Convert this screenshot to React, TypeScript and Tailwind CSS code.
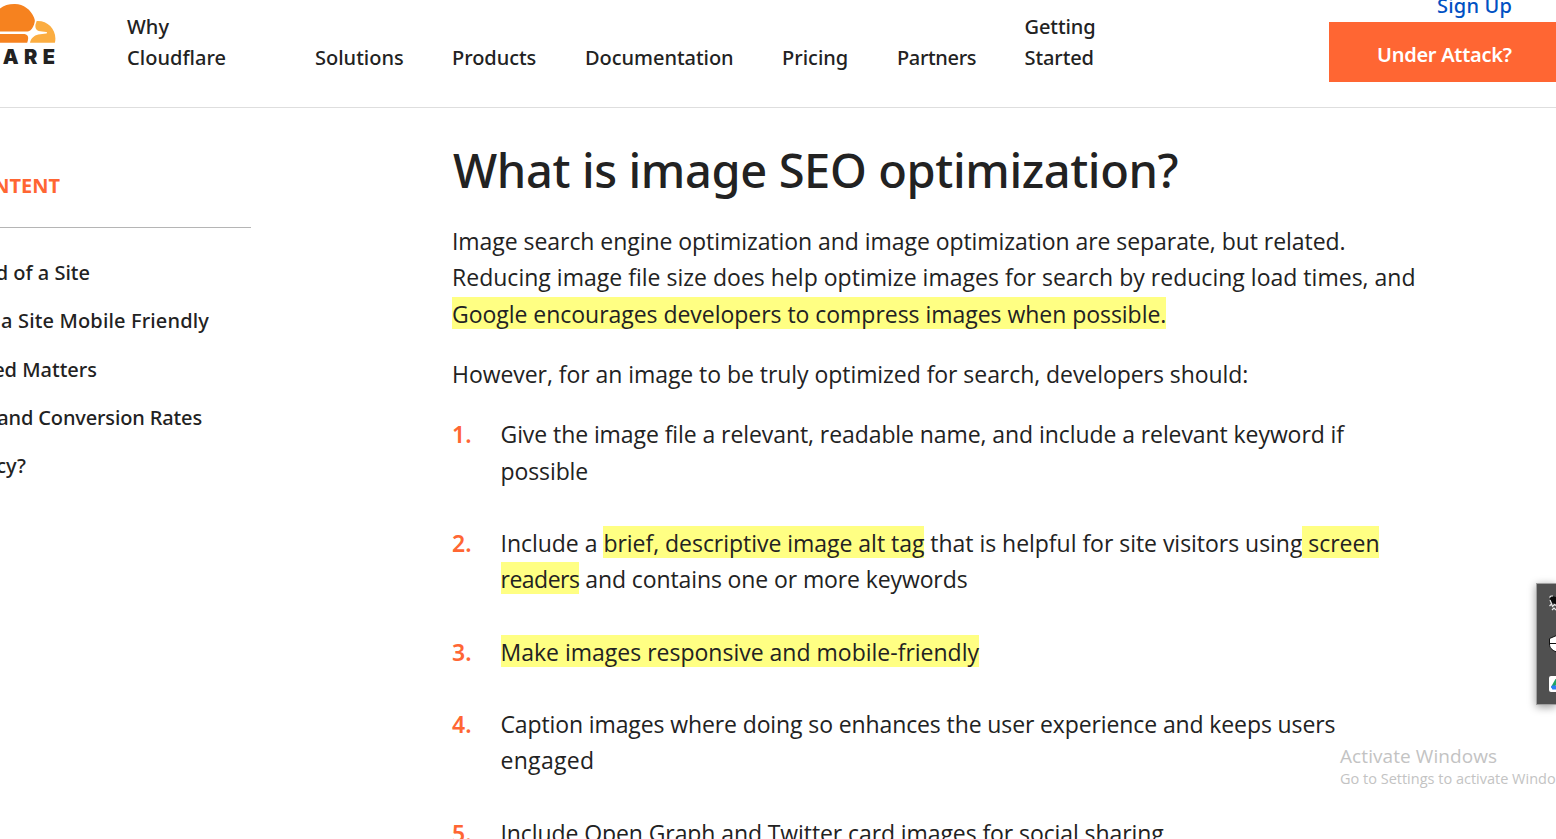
import React from "react";

function Mark({ children }: { children: React.ReactNode }) {
  return (
    <mark className="bg-transparent bg-[linear-gradient(#ffff83,#ffff83)] bg-[length:100%_32px] bg-no-repeat pt-px text-inherit">
      {children}
    </mark>
  );
}

function Logo() {
  return (
    <svg className="block shrink-0" width="70" height="75" viewBox="0 0 70 75">
      <path d="M0 8.500C4 5 9 3.800 15 3.900c8.500.2 16 5.600 19 13.600.8 2 1 3.300.7 4.500C34 25.500 32.500 28.500 30.500 30.200c-1 .9-2.500 1.300-4.500 1.300H0Z" fill="#f6821f" />
      <path d="M0 34h24.500c2.200.2 3.700 1.700 3.700 4 0 1.600-.4 3-1 4.700H0Z" fill="#f6821f" />
      <path d="M36.700 21.100C47 20.500 55.400 28.500 55.400 38.500c0 1.500-.2 2.800-.5 4.200H30c.7-4.200 4-7.200 8.300-8.200l8-1.100c1-.3 1-1.300 0-1.500l-6-.7c-4.300-.8-5.300-3.200-4.800-6.800Z" fill="#fbad41" />
      <text x="2.700 24 42.700" y="64" fill="#222" className="font-['Inter'] text-[20px] font-black">ARE</text>
    </svg>
  );
}

function Header() {
  return (
    <header className="flex h-[108px] border-b border-[#dedede]">
      <div className="w-[127px] shrink-0">
        <Logo />
      </div>
      <nav className="grid h-[73px] w-[1202px] shrink-0 grid-cols-[188px_137px_133px_197px_115px_127.500px_1fr] items-end text-[20px] leading-[31px] font-medium text-[#222]">
        <a className="tracking-[0.03px]">Why<br />Cloudflare</a>
        <a>Solutions</a>
        <a className="tracking-[-0.05px]">Products</a>
        <a className="tracking-[-0.04px]">Documentation</a>
        <a>Pricing</a>
        <a className="tracking-[-0.35px]">Partners</a>
        <a className="tracking-[-0.1px]">Getting<br />Started</a>
      </nav>
      <div className="flex w-[227px] shrink-0 flex-col">
        <a className="-mt-2 block h-[30px] pl-[108px] text-[20px] leading-[28px] font-medium tracking-[0.2px] whitespace-nowrap text-[#0051c3]">Sign Up</a>
        <a className="flex h-[60px] items-center bg-[#ff6633] pt-1.5 pl-12 text-[20px] font-semibold tracking-[-0.27px] whitespace-nowrap text-white">Under Attack?</a>
      </div>
    </header>
  );
}

function Sidebar() {
  return (
    <aside className="w-[452px] shrink-0 font-medium text-[#222]">
      <div className="flex h-[120px] w-[251px] flex-col border-b border-[#b5b5b5]">
        <h2 className="mt-[62px] flex w-[60px] justify-end text-[20px] leading-[32px] font-bold text-[#ff6633]">NTENT</h2>
      </div>
      <ul className="mt-[21px] text-[20px] leading-[48.300px] whitespace-nowrap">
        <li className="flex w-[90px] justify-end">d of a Site</li>
        <li className="flex w-[209px] justify-end tracking-[0.15px]">a Site Mobile Friendly</li>
        <li className="flex w-[97px] justify-end">ed Matters</li>
        <li className="flex w-[202px] justify-end tracking-[-0.14px]">and Conversion Rates</li>
        <li className="flex w-[26px] justify-end">cy?</li>
      </ul>
    </aside>
  );
}

function Item({ n, children }: { n: number; children: React.ReactNode }) {
  return (
    <li className="flex">
      <span className="w-[48.500px] shrink-0 font-['Noto_Sans'] font-semibold text-[#ff6633]">{n}.</span>
      <div>{children}</div>
    </li>
  );
}

function Article() {
  return (
    <main className="w-[1104px] shrink-0 pt-8 text-[#222]">
      <h1 className="pl-px text-[47px] leading-[60px] font-medium tracking-[-0.38px]">What is image SEO optimization?</h1>
      <div className="mt-[23px] font-['Open_Sans'] text-[23px] leading-[36.300px] whitespace-nowrap">
        <p>
          <span className="block tracking-[-0.055px]">Image search engine optimization and image optimization are separate, but related.</span>
          <span className="block tracking-[0.015px]">Reducing image file size does help optimize images for search by reducing load times, and</span>
          <span className="block tracking-[-0.035px]"><Mark>Google encourages developers to compress images when possible.</Mark></span>
        </p>
        <p className="mt-6 tracking-[-0.055px]">However, for an image to be truly optimized for search, developers should:</p>
        <ol className="mt-[24.200px] flex flex-col gap-[36.100px]">
          <Item n={1}>
            <span className="block tracking-[-0.08px]">Give the image file a relevant, readable name, and include a relevant keyword if</span>
            <span className="block tracking-[-0.1px]">possible</span>
          </Item>
          <Item n={2}>
            <span className="block tracking-[-0.03px]">Include a <Mark>brief, descriptive image alt tag</Mark> that is helpful for site visitors using<Mark> screen</Mark></span>
            <span className="block tracking-[-0.110px]"><span className="tracking-[-0.5px]"><Mark>readers</Mark></span> and contains one or more keywords</span>
          </Item>
          <Item n={3}>
            <span className="block"><Mark>Make images responsive and mobile-friendly</Mark></span>
          </Item>
          <Item n={4}>
            <span className="block tracking-[-0.115px]">Caption images where doing so enhances the user experience and keeps users</span>
            <span className="block tracking-[0.3px]">engaged</span>
          </Item>
          <Item n={5}>
            <span className="block tracking-[-0.09px]">Include Open Graph and Twitter card images for social sharing</span>
          </Item>
        </ol>
      </div>
    </main>
  );
}

function Tray() {
  return (
    <div className="absolute top-[583px] left-[1536px] h-[122px] w-5 overflow-visible border border-r-0 border-[#a0a0a0] bg-[#505050] shadow-[0_2px_9px_rgba(0,0,0,0.4)]">
      <svg className="block" width="19" height="120" viewBox="1537 584 19 120">
        <path d="M1550 597l2-1 4 1v7l-4-1-2-3Z" fill="#0a0a0a" />
        <path d="M1549.500 597.500l1.500-1.500h2M1550 600l1.500 3.500M1549.500 606l2-2 1 2.500 2-2 1.500 1M1552 610l2-2 2 2" fill="none" stroke="#e8e8e8" strokeWidth="1.200" />
        <path d="M1556.500 635.500l-7 3v5.500c0 3.500 2 6 7 8Z" fill="#fff" stroke="#111" />
        <path d="M1549 643.500h7" stroke="#111" />
        <rect x="1549" y="676" width="16" height="16" rx="2" fill="#fff" />
        <path d="M1551 687l4.500-8h.5v6l-3 4.500Z" fill="#1fa463" />
        <path d="M1551 687l1-1.500h4v4h-3.500Z" fill="#2f7df6" />
      </svg>
    </div>
  );
}

export default function App() {
  return (
    <div className="relative h-[839px] w-[1556px] overflow-hidden bg-white font-['Noto_Sans',sans-serif]">
      <Header />
      <div className="flex">
        <Sidebar />
        <Article />
      </div>
      <div className="absolute top-[743px] left-[1340px] font-['Open_Sans'] whitespace-nowrap text-[#c3c3c3]">
        <p className="text-[19px] leading-[27px] tracking-[0.08px]">Activate Windows</p>
        <p className="text-[14.500px] leading-[18px]">Go to Settings to activate Windo</p>
      </div>
      <Tray />
    </div>
  );
}
